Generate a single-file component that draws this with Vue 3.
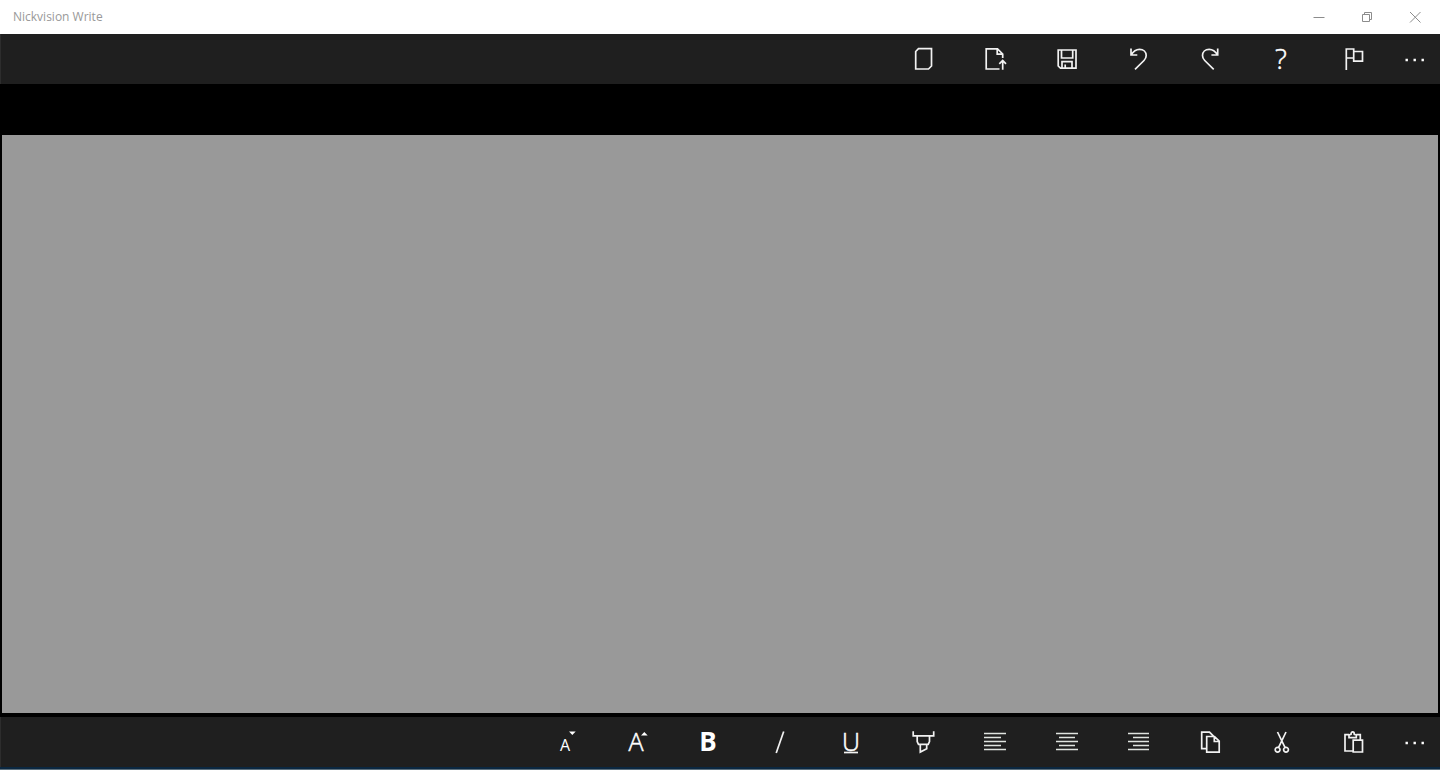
<template>
  <div class="window">
    <header class="title-bar">
      <span class="title">Nickvision Write</span>
      <div class="window-controls">
        <button type="button" aria-label="Minimize">
          <svg width="12" height="12" viewBox="0 0 12 12"><path d="M0.5 6.5h11" /></svg>
        </button>
        <button type="button" aria-label="Restore">
          <svg width="12" height="12" viewBox="0 0 12 12"><path d="M1.5 3.5h7v7h-7zM3.5 3.5v-2h7v7h-2" /></svg>
        </button>
        <button type="button" aria-label="Close">
          <svg width="12" height="12" viewBox="0 0 12 12"><path d="M1 1l10.5 10.5M11.5 1L1 11.5" /></svg>
        </button>
      </div>
    </header>

    <nav class="command-bar" aria-label="File">
      <div class="commands file-commands">
        <button v-for="item in fileCommands" :key="item.label" type="button" :aria-label="item.label">
          <svg class="icon" viewBox="0 0 24 24">
            <path v-if="item.path" :d="item.path" />
            <text v-if="item.text" class="glyph-help" x="12" y="22">{{ item.text }}</text>
          </svg>
        </button>
      </div>
      <button type="button" class="more" aria-label="More file commands">
        <svg class="icon" viewBox="0 0 24 24"><path class="solid" :d="dots" /></svg>
      </button>
    </nav>

    <main class="editor">
      <textarea v-model="content" aria-label="Document" spellcheck="false"></textarea>
    </main>

    <nav class="command-bar" aria-label="Format">
      <div class="commands format-commands">
        <button v-for="item in formatCommands" :key="item.label" type="button" :aria-label="item.label">
          <svg class="icon" viewBox="0 0 24 24">
            <path v-if="item.path" :d="item.path" :class="item.pathClass" />
            <text v-if="item.text" :class="item.textClass" x="12" y="21">{{ item.text }}</text>
          </svg>
        </button>
      </div>
      <button type="button" class="more" aria-label="More format commands">
        <svg class="icon" viewBox="0 0 24 24"><path class="solid" :d="dots" /></svg>
      </button>
    </nav>
    <div class="desktop-edge"></div>
  </div>
</template>

<script setup>
import { ref } from 'vue'

const content = ref('')

const dots = 'M2.5 11.8h2.4v2.4h-2.4zM10.5 11.8h2.4v2.4h-2.4zM18.5 11.8h2.4v2.4h-2.4z'

const fileCommands = [
  { label: 'New', path: 'M7.5 1.7H20.5V19L17.5 22H4.7V4.5z' },
  { label: 'Open', path: 'M16.5 22H3.2V1.8H14.5L19.7 7V11M14.2 2V7.2H19.5M19.7 22.7V13.5M16.3 16.8L19.7 13.4L23 16.8' },
  { label: 'Save', path: 'M4.2 3H22V21.2H6.5L4.2 19zM7.5 3V11H18.7V3M8 21V14.7H18V21M11.2 21V17.5' },
  { label: 'Undo', path: 'M5 1.5V8H11.3M5 8C7.5 4 10 2.3 13.5 2.3C17.5 2.3 20.2 5 20.2 8.5C20.2 10.5 19.5 12 18 13.5L9 22.3' },
  { label: 'Redo', path: 'M19.7 1.5V8H13.4M19.7 8C17.2 4 14.7 2.3 11.2 2.3C7.2 2.3 4.5 5 4.5 8.5C4.5 10.5 5.2 12 6.7 13.5L15.7 22.3' },
  { label: 'Help', text: '?' },
  { label: 'Feedback', path: 'M5.3 23V2H12.7V11H5.3M12.7 4.5H21.5V14.2H12.7V11' }
]

const formatCommands = [
  { label: 'Shrink font', text: 'A', textClass: 'glyph-small', path: 'M16 1.5H22.7L19.3 5z', pathClass: 'solid' },
  { label: 'Grow font', text: 'A', textClass: 'glyph-light', path: 'M17 5.5H23.7L20.3 2z', pathClass: 'solid' },
  { label: 'Bold', text: 'B', textClass: 'glyph-bold' },
  { label: 'Italic', path: 'M8.2 23L15.7 1.5' },
  { label: 'Underline', text: 'U', textClass: 'glyph-light', path: 'M5 22.5H19' },
  { label: 'Highlight', path: 'M2.2 1.3V5.8H22.7V1.3M6.2 5.8V11.5L7.5 14.3H17.2L18.5 11.5V5.8M9.3 14.3V22L15.7 18.7V14.3' },
  { label: 'Align left', path: 'M1 3.5H23M1 7.5H18M1 11.5H23M1 15.5H18M1 19.5H23', pathClass: 'rules' },
  { label: 'Align center', path: 'M2 3.5H24M5 7.5H21M2 11.5H24M5 15.5H21M2 19.5H24', pathClass: 'rules' },
  { label: 'Align right', path: 'M2 3.5H23M7 7.5H23M2 11.5H23M7 15.5H23M2 19.5H23', pathClass: 'rules' },
  { label: 'Copy', path: 'M8.5 18.7H3.7V2.2H11.5L15.5 6.2M8.7 6.5H16.5L21.2 11.2V22.2H8.7zM16.3 6.7V11.5H21' },
  { label: 'Cut', path: 'M8.5 2L16.1 17.6M17 2L9.5 17.6M11 19.7A2.4 2.4 0 1 1 6.2 19.7A2.4 2.4 0 1 1 11 19.7M19.4 19.7A2.4 2.4 0 1 1 14.6 19.7A2.4 2.4 0 1 1 19.4 19.7' },
  { label: 'Paste', path: 'M12 21H4V4.7H8M15.3 4.7H19.3V10M8 7.7V5L10 4.3C10 1 13.3 1 13.3 4.3L15.3 5V7.7zM12.2 10.2H21.5V22H12.2z' }
]
</script>

<style>
body {
  margin: 0;
  background: #000;
}
</style>

<style scoped>
.window {
  display: flex;
  flex-direction: column;
  min-height: 100vh;
  background: #000;
  font-family: "Open Sans", "Noto Sans", sans-serif;
}

button {
  display: flex;
  align-items: center;
  justify-content: center;
  padding: 0;
  border: 0;
  background: transparent;
  color: inherit;
  font-family: inherit;
}

.title-bar {
  display: flex;
  justify-content: space-between;
  height: 34px;
  padding: 0 1px 0 13px;
  box-sizing: border-box;
  background: #fff;
  color: #999;
}

.title {
  font-size: 12px;
  line-height: 33px;
}

.window-controls {
  display: flex;
}

.window-controls button {
  width: 48px;
}

.window-controls svg {
  fill: none;
  stroke: #8c8c8c;
}

.command-bar {
  display: flex;
  justify-content: flex-end;
  height: 50px;
  box-sizing: border-box;
  border-left: 1px solid #2d2d2d;
  background: #1f1f1f;
  color: #fff;
}

.commands {
  display: grid;
  grid-auto-flow: column;
  grid-auto-columns: 1fr;
}

.file-commands {
  width: 502px;
}

.format-commands {
  width: 860px;
}

.more {
  width: 51px;
}

.command-bar button:hover {
  background: #333;
}

.icon {
  width: 24px;
  height: 24px;
  overflow: visible;
  fill: none;
  stroke: #f2f2f2;
  stroke-width: 1.7;
}

.icon .solid {
  fill: #fff;
  stroke: none;
}

.icon .rules {
  stroke: #e0e4e0;
  stroke-width: 1.5;
}

.icon text {
  fill: #fff;
  stroke: none;
  text-anchor: middle;
}

.icon .glyph-help,
.icon .glyph-light {
  font-weight: 300;
  stroke: #fff;
  stroke-width: 0.5;
}

.glyph-help {
  font-size: 28px;
}

.glyph-light {
  font-size: 25px;
}

.glyph-small {
  font-size: 16px;
}

.glyph-bold {
  font-size: 26px;
  font-weight: 700;
}

.editor {
  display: flex;
  flex: 1;
  padding: 51px 2px 4px;
}

.editor textarea {
  flex: 1;
  padding: 8px 10px;
  border: 0;
  outline: none;
  resize: none;
  background: #999;
  color: #000;
  font: inherit;
  font-size: 14px;
}

.desktop-edge {
  height: 1px;
  border-top: 2px solid #0b2740;
  background: #5c6f7c;
}
</style>
